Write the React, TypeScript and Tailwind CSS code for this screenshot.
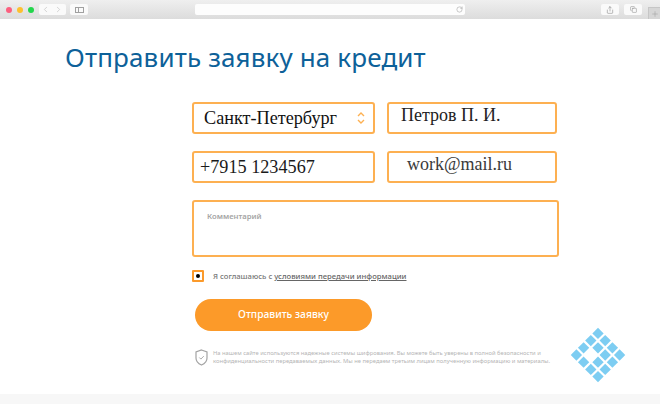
import React from 'react';
import { ChevronLeft, ChevronRight, Share, RotateCw, Copy, Plus } from 'lucide-react';

const logoCells = [
  [0, -21.6],
  [-7.2, -14.4], [7.2, -14.4],
  [-14.4, -7.2], [0, -7.2], [14.4, -7.2],
  [-21.6, 0], [7.2, 0], [21.6, 0],
  [-14.4, 7.2], [0, 7.2], [14.4, 7.2],
  [-7.2, 14.4], [7.2, 14.4],
  [0, 21.6],
];

const BrowserBar = () => (
  <div className="flex h-[19px] shrink-0 items-center bg-gradient-to-b from-[#efefef] to-[#dcdcdc] pl-[6px] pr-0">
    <div className="flex items-center gap-[5px]">
      <span className="h-[6px] w-[6px] rounded-full bg-[#fc5f7f]" />
      <span className="h-[6px] w-[6px] rounded-full bg-[#fdc02f]" />
      <span className="h-[6px] w-[6px] rounded-full bg-[#22d64b]" />
    </div>
    <div className="ml-[5px] flex h-[11px] w-[27px] items-center rounded-[2px] bg-[#fafafa]">
      <ChevronLeft className="h-[9px] w-[13px] text-[#b5b5b5]" strokeWidth={1.5} />
      <ChevronRight className="h-[9px] w-[13px] text-[#b5b5b5]" strokeWidth={1.5} />
    </div>
    <div className="ml-[4px] flex h-[11px] w-[18px] items-center justify-center rounded-[2px] bg-[#fafafa]">
      <span className="flex h-[6px] w-[9px] border border-[#a0a0a0]">
        <span className="w-[3px] border-r border-[#a0a0a0]" />
      </span>
    </div>
    <div className="ml-[107px] flex h-[11px] w-[270px] items-center justify-end rounded-[2px] bg-[#fdfdfd] pr-[2px]">
      <RotateCw className="h-[7px] w-[7px] text-[#8a8a8a]" strokeWidth={1.5} />
    </div>
    <div className="ml-[136px] flex h-[11px] w-[18px] items-center justify-center rounded-[2px] bg-[#fafafa]">
      <Share className="h-[8px] w-[8px] text-[#777777]" strokeWidth={1.5} />
    </div>
    <div className="ml-[5px] flex h-[11px] w-[18px] items-center justify-center rounded-[2px] bg-[#fafafa]">
      <Copy className="h-[7px] w-[7px] text-[#777777]" strokeWidth={1.5} />
    </div>
    <div className="ml-[6px] flex h-[12px] w-[12px] items-center justify-center self-end border-l border-t border-[#c6c6c6] bg-[#d6d6d6]">
      <Plus className="h-[8px] w-[8px] text-[#9a9a9a]" strokeWidth={1.5} />
    </div>
  </div>
);

const serif = "font-['Liberation_Serif',serif]";
const field = 'flex h-[32px] rounded-[3px] border-2 border-[#fdb051] bg-white';

export default function App() {
  return (
    <div className="flex h-[404px] w-[660px] flex-col overflow-hidden bg-white font-['Noto_Sans',sans-serif]">
      <BrowserBar />
      <main className="relative flex-1 bg-white">
        <h1 className="pl-[65px] pt-[22px] text-[26px] leading-[33px] tracking-[0.14px] text-[#0d6199]">
          Отправить заявку на кредит
        </h1>

        <div className="ml-[192px] mt-[28px] w-[368px]">
          <div className="grid grid-cols-[183px_170px] gap-x-[12px] gap-y-[17px]">
            <div className={`${field} items-center justify-between pl-[10px] pr-[8px]`}>
              <span className={`${serif} text-[18.2px] leading-none text-[#111111]`}>Санкт-Петербург</span>
              <svg width="8" height="14" viewBox="0 0 8 14" fill="none" stroke="#fdb051" strokeWidth="1.4">
                <path d="M1 5l3-3 3 3" />
                <path d="M1 9l3 3 3-3" />
              </svg>
            </div>
            <div className={`${field} pl-[12px] pt-[1px]`}>
              <span className={`${serif} text-[18px] leading-[20px] text-[#222222]`}>Петров П. И.</span>
            </div>
            <div className={`${field} items-center pl-[6px]`}>
              <span className={`${serif} text-[18.2px] leading-none text-[#1a1a1a]`}>+7915 1234567</span>
            </div>
            <div className={`${field} pl-[18px] pt-[1px]`}>
              <span className={`${serif} text-[18px] leading-[20px] text-[#3a3a3a]`}>work@mail.ru</span>
            </div>
          </div>

          <div className="mt-[17px] h-[57px] w-[367px] rounded-[3px] border-2 border-[#fdb051] pl-[13px] pt-[9px]">
            <span className="block text-[7.7px] font-semibold leading-[11px] text-[#a5a5a5]">Комментарий</span>
          </div>

          <div className="mt-[13px] flex items-center">
            <span className="flex h-[12px] w-[12px] items-center justify-center rounded-[1px] border-2 border-[#fb9a2b]">
              <span className="h-[4px] w-[4px] rounded-full bg-black" />
            </span>
            <span className="ml-[9px] text-[7.7px] font-medium leading-[12px] text-[#777777]">
              Я соглашаюсь с{' '}
              <span className="text-[#666666] underline">условиями передачи информации</span>
            </span>
          </div>

          <button className="ml-[3px] mt-[17px] flex h-[32px] w-[177px] items-center justify-center rounded-full bg-[#fc9a29] text-[10.25px] font-medium text-white">
            Отправить заявку
          </button>

          <div className="ml-[3px] mt-[18px] flex w-[360px] items-start">
            <svg className="shrink-0" width="13" height="17" viewBox="0 0 13 17" fill="none" stroke="#a3a3a3" strokeWidth="1.2">
              <path d="M6.5 1L12 3v6c0 3.5-2.5 5.800-5.500 7C3.500 14.800 1 12.500 1 9V3z" />
              <path d="M4.300 8.500l1.600 1.600 2.900-3" strokeWidth="0.9" />
            </svg>
            <p className="ml-[5px] mt-[1px] whitespace-nowrap text-[5.8px] leading-[7.5px] text-[#b5b5b5]">
              На нашем сайте используются надежные системы шифрования. Вы можете быть уверены в полной безопасности и
              <br />
              конфиденциальности передаваемых данных. Мы не передаем третьим лицам полученную информацию и материалы.
            </p>
          </div>
        </div>

        <svg className="absolute left-[570px] top-[308px]" width="56" height="56" viewBox="-28 -28 56 56">
          {logoCells.map(([x, y]) => (
            <rect key={`${x}_${y}`} x={x - 4} y={y - 4} width="8" height="8" fill="#7dcdf2" transform={`rotate(45 ${x} ${y})`} />
          ))}
        </svg>
      </main>
      <div className="h-[10px] shrink-0 bg-[#f7f7f7]" />
    </div>
  );
}
